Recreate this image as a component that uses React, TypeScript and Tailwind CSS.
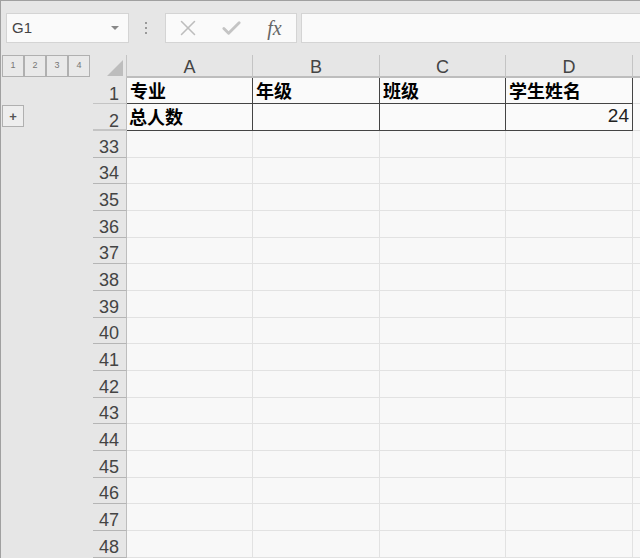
import { Check, X } from "lucide-react";

const columns = ["A", "B", "C", "D"];
const emptyRows = ["33", "34", "35", "36", "37", "38", "39", "40", "41", "42", "43", "44", "45", "46", "47", "48"];
const colWidths = ["w-[126px]", "w-[127px]", "w-[126px]", "w-[127px]"];

function FormulaBar() {
  return (
    <div className="flex h-[55px] shrink-0 items-start pl-[6px] pt-[13px]">
      <div className="flex h-[30px] w-[123px] items-center justify-between border border-[#d4d4d4] bg-[#fafafa] pl-[5px] pr-[9px]">
        <span className="text-[15px] text-[#444444]">G1</span>
        <span className="h-0 w-0 border-x-[4px] border-t-[4px] border-x-transparent border-t-[#888888]" />
      </div>
      <div className="flex h-[30px] w-[36px] flex-col items-center justify-center gap-[3px] pr-[2px]">
        <span className="h-[2px] w-[2px] bg-[#999999]" />
        <span className="h-[2px] w-[2px] bg-[#999999]" />
        <span className="h-[2px] w-[2px] bg-[#999999]" />
      </div>
      <div className="flex h-[30px] w-[132px] items-center border border-[#d4d4d4] bg-[#fafafa]">
        <span className="flex w-[43px] justify-center">
          <X size={26} strokeWidth={1.4} className="text-[#bdbdbd]" />
        </span>
        <span className="flex w-[44px] justify-center">
          <Check size={23} strokeWidth={3} className="text-[#c4c4c4]" />
        </span>
        <span className="flex w-[43px] justify-center font-['Liberation_Serif',serif] text-[20px] italic leading-none text-[#666666]">fx</span>
      </div>
      <div className="ml-[4px] h-[30px] flex-1 border-y border-l border-[#d4d4d4] bg-[#fafafa]" />
    </div>
  );
}

function OutlineGutter() {
  return (
    <div className="flex w-[93px] shrink-0 flex-col pl-[2px]">
      <div className="flex h-[23px] w-[88px]">
        {["1", "2", "3", "4"].map((level) => (
          <span
            key={level}
            className="flex h-[22px] w-[22px] items-center justify-center border border-[#b0b0b0] bg-[#e9e9e9] text-[9px] text-[#777777]"
          >
            {level}
          </span>
        ))}
      </div>
      <span className="mt-[27px] flex h-[22px] w-[22px] items-center justify-center border border-[#b0b0b0] bg-[#eeeeee] text-[13px] font-bold leading-none text-[#555555]">
        +
      </span>
    </div>
  );
}

function RowHeader({ label, className }: { label: string; className: string }) {
  return (
    <div className={`flex w-[34px] shrink-0 items-end justify-end border-r border-[#bdbdbd] pr-[7px] text-[18px] text-[#444444] ${className}`}>
      {label}
    </div>
  );
}

function Sheet() {
  return (
    <div className="flex flex-1 flex-col overflow-hidden">
      <div className="flex h-[23px] shrink-0">
        <div className="flex w-[34px] shrink-0 items-end justify-end border-r border-[#c4c4c4] pb-[2px] pr-[3px]">
          <span className="h-0 w-0 border-b-[16px] border-l-[16px] border-b-[#bdbdbd] border-l-transparent" />
        </div>
        {columns.map((col, i) => (
          <div
            key={col}
            className={`flex ${colWidths[i]} items-end justify-center border-r border-b-2 border-r-[#c4c4c4] border-b-[#bdbdbd] text-[18px] leading-[18px] text-[#444444]`}
          >
            {col}
          </div>
        ))}
        <div className="flex-1 border-b-2 border-[#bdbdbd]" />
      </div>

      <div className="flex h-[26px] shrink-0">
        <RowHeader label="1" className="border-b border-b-[#c4c4c4] leading-[18px]" />
        {["专业", "年级", "班级", "学生姓名"].map((text, i) => (
          <div
            key={text}
            className={`flex ${colWidths[i]} items-center border-r border-b border-[#444444] bg-[#fafafa] pb-[1px] pl-[3px] font-['Noto_Sans_CJK_SC',sans-serif] text-[18px] font-bold text-black`}
          >
            {text}
          </div>
        ))}
        <div className="flex-1 border-b border-[#e2e2e2] bg-[#fafafa]" />
      </div>

      <div className="flex h-[27px] shrink-0">
        <RowHeader label="2" className="border-b-2 border-b-[#c4c4c4] leading-[16px]" />
        <div className={`flex ${colWidths[0]} items-center border-r border-b border-[#444444] bg-[#fafafa] pb-[1px] pl-[2px] font-['Noto_Sans_CJK_SC',sans-serif] text-[18px] font-bold text-black`}>
          总人数
        </div>
        <div className={`${colWidths[1]} border-r border-b border-[#444444] bg-[#fafafa]`} />
        <div className={`${colWidths[2]} border-r border-b border-[#444444] bg-[#fafafa]`} />
        <div className={`flex ${colWidths[3]} items-center justify-end border-r border-b border-[#444444] bg-[#fafafa] pb-[1px] pr-[3px] text-[19px] text-[#222222]`}>
          24
        </div>
        <div className="flex-1 border-b border-[#e2e2e2] bg-[#fafafa]" />
      </div>

      {emptyRows.map((row) => (
        <div key={row} className="flex h-[26.67px] shrink-0">
          <RowHeader label={row} className="border-b border-b-[#b5b5b5] leading-[20px]" />
          {columns.map((col, i) => (
            <div key={col} className={`${colWidths[i]} border-r border-b border-[#e2e2e2] bg-[#f8f8f8]`} />
          ))}
          <div className="flex-1 border-b border-[#e2e2e2] bg-[#f8f8f8]" />
        </div>
      ))}
    </div>
  );
}

export default function App() {
  return (
    <div className="flex h-[558px] w-[640px] flex-col overflow-hidden bg-[#e6e6e6] font-['Liberation_Sans',sans-serif] shadow-[inset_1px_1px_0_#a0a0a0]">
      <FormulaBar />
      <div className="flex min-h-0 flex-1">
        <OutlineGutter />
        <Sheet />
      </div>
    </div>
  );
}
